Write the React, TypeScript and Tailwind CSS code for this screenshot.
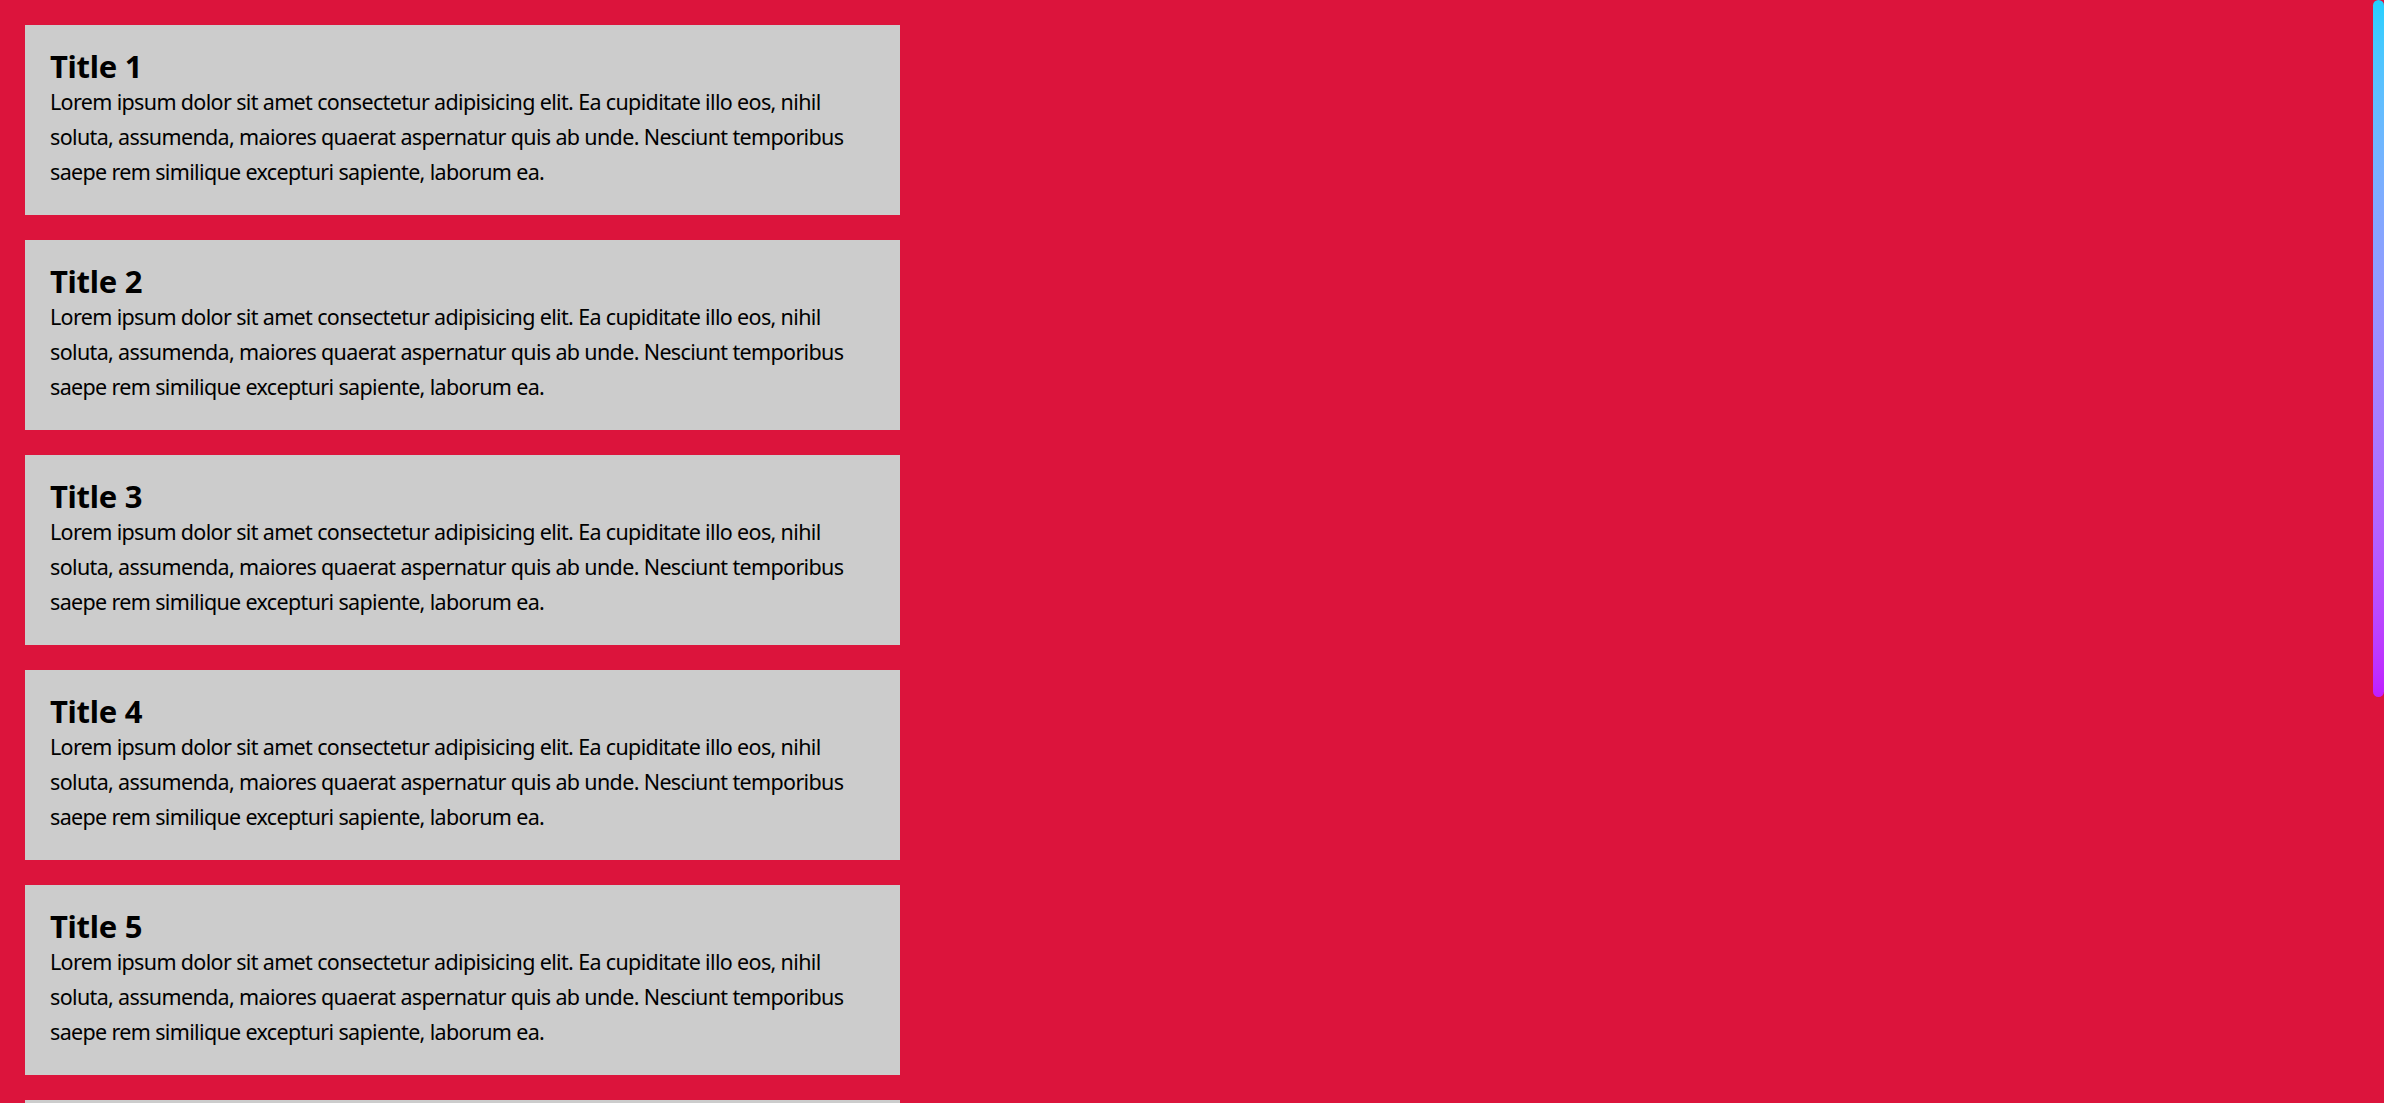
import React from "react";

const lines = [
  "Lorem ipsum dolor sit amet consectetur adipisicing elit. Ea cupiditate illo eos, nihil",
  "soluta, assumenda, maiores quaerat aspernatur quis ab unde. Nesciunt temporibus",
  "saepe rem similique excepturi sapiente, laborum ea.",
];

function Card({ n }: { n: number }) {
  return (
    <div className="w-[875px] h-[190px] shrink-0 bg-[#cccccc] p-[25px] text-black">
      <h2 className="text-[31px] leading-[33px] font-bold tracking-[-0.3px]">Title {n}</h2>
      <p className="mt-[1px] text-[21.5px] leading-[35px] tracking-[-0.65px] whitespace-nowrap">
        {lines.map((l, i) => (
          <span key={i} className="block">
            {l}
          </span>
        ))}
      </p>
    </div>
  );
}

export default function App() {
  return (
    <div
      className="relative h-screen w-full overflow-hidden bg-[#dc143c]"
      style={{ fontFamily: '"Noto Sans", "Open Sans", sans-serif' }}
    >
      <div className="flex flex-col gap-[25px] p-[25px]">
        {[1, 2, 3, 4, 5, 6, 7, 8].map((n) => (
          <Card key={n} n={n} />
        ))}
      </div>
      <div className="absolute right-0 top-0 h-[697px] w-[11px] rounded-full bg-gradient-to-b from-[#20d0ff] to-[#c01cff]" />
    </div>
  );
}
